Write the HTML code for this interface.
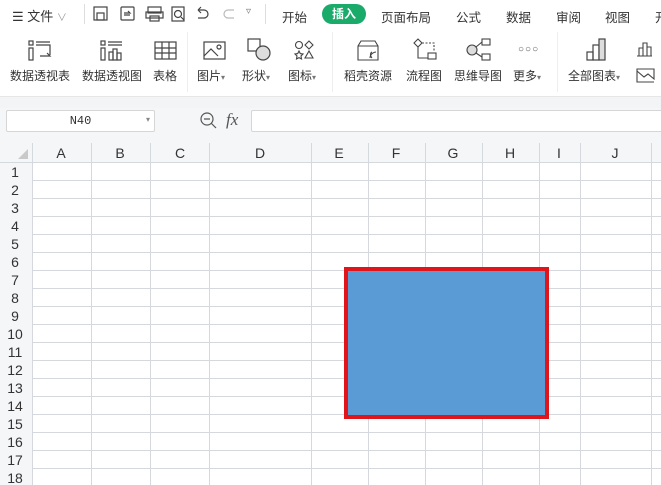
<!DOCTYPE html>
<html><head><meta charset="utf-8"><style>
*{margin:0;padding:0;box-sizing:border-box}
body{width:661px;height:485px;overflow:hidden;background:#fff;font-family:"Liberation Sans","Noto Sans CJK SC",sans-serif;position:relative;color:#333}
.a{position:absolute}
.t{font-size:12px;white-space:nowrap}
.lbl{position:absolute;top:66px;font-size:12px;color:#333;white-space:nowrap}
svg{position:absolute;overflow:visible}
</style></head><body>
<!-- top bar -->
<div class="a t" style="left:12px;top:6px;font-size:13px">☰ 文件 <span style="color:#999;font-size:10px">∨</span></div>
<div class="a" style="left:84px;top:4px;width:1px;height:20px;background:#ddd"></div>
<svg style="left:93px;top:6px" width="150" height="16" fill="none" stroke="#444" stroke-width="1.2">
<rect x="1" y="1" width="13" height="13"/><rect x="4" y="7" width="7" height="7"/>
<rect x="28" y="1" width="13" height="13" rx="1"/><path d="M31 7h6l-2-2M37 9h-6"/>
<rect x="55" y="1" width="13" height="6"/><rect x="53" y="6" width="17" height="6"/><rect x="57" y="10" width="9" height="5"/>
<rect x="79" y="1" width="12" height="14"/><circle cx="85" cy="8" r="3.5"/><path d="M88 11l3 3"/>
<path d="M105 4h6a4 4 0 0 1 0 8h-6M105 4l3-3M105 4l3 3"/>
<path stroke="#bbb" d="M141 4h-6a4 4 0 0 0 0 8h6"/>
</svg>
<div class="a t" style="left:246px;top:6px;color:#777;font-size:10px">▿</div>
<div class="a" style="left:265px;top:4px;width:1px;height:20px;background:#ddd"></div>
<div class="a t" style="left:282px;top:7px;font-size:12.5px">开始</div>
<div class="a t" style="left:322px;top:4px;width:44px;height:20px;border-radius:10px;background:#1aaa6a;color:#fff;font-weight:bold;text-align:center;line-height:20px">插入</div>
<div class="a t" style="left:381px;top:7px;font-size:12.5px">页面布局</div>
<div class="a t" style="left:456px;top:7px;font-size:12.5px">公式</div>
<div class="a t" style="left:506px;top:7px;font-size:12.5px">数据</div>
<div class="a t" style="left:556px;top:7px;font-size:12.5px">审阅</div>
<div class="a t" style="left:605px;top:7px;font-size:12.5px">视图</div>
<div class="a t" style="left:655px;top:7px;font-size:12.5px">开</div>
<!-- ribbon -->
<div class="a" style="left:0;top:28px;width:661px;height:68px">
<svg style="left:28px;top:12px" width="24" height="22" fill="none" stroke="#444" stroke-width="1.2"><rect x="1" y="1" width="4" height="4"/><rect x="1" y="8" width="4" height="12"/><path d="M8 2h14M8 5h14v10M12 16h10l-3-3"/></svg>
<div class="lbl" style="left:10px;top:39px">数据透视表</div>
<svg style="left:100px;top:12px" width="24" height="22" fill="none" stroke="#444" stroke-width="1.2"><rect x="1" y="1" width="4" height="4"/><rect x="1" y="8" width="4" height="12"/><path d="M8 2h14M8 5h14"/><rect x="9" y="12" width="4" height="8"/><rect x="13" y="9" width="4" height="11"/><rect x="17" y="13" width="4" height="7"/></svg>
<div class="lbl" style="left:82px;top:39px">数据透视图</div>
<svg style="left:154px;top:13px" width="24" height="20" fill="none" stroke="#444" stroke-width="1.2"><rect x="1" y="1" width="21" height="17"/><path d="M1 7h21M1 12h21M8 1v17M15 1v17"/></svg>
<div class="lbl" style="left:153px;top:39px">表格</div>
<div class="a" style="left:187px;top:4px;width:1px;height:60px;background:#eee"></div>
<svg style="left:203px;top:13px" width="24" height="20" fill="none" stroke="#444" stroke-width="1.2"><rect x="1" y="1" width="21" height="17"/><path d="M1 15l7-7 7 7"/><circle cx="16" cy="6" r="2"/></svg>
<div class="lbl" style="left:197px;top:39px">图片<span style="font-size:8px;color:#777">▾</span></div>
<svg style="left:247px;top:10px" width="26" height="24" fill="none" stroke="#444" stroke-width="1.2"><rect x="1" y="1" width="12" height="12"/><circle cx="16" cy="15" r="7" fill="#ddd"/></svg>
<div class="lbl" style="left:242px;top:39px">形状<span style="font-size:8px;color:#777">▾</span></div>
<svg style="left:294px;top:12px" width="22" height="20" fill="none" stroke="#444" stroke-width="1.1"><circle cx="5" cy="5" r="3.5"/><path d="M15 1l4 4-4 4-4-4z"/><path d="M5 11l1.3 2.6 2.7.4-2 2 .5 3-2.5-1.4-2.5 1.4.5-3-2-2 2.7-.4z"/><path d="M15 11l4 7h-8z"/></svg>
<div class="lbl" style="left:288px;top:39px">图标<span style="font-size:8px;color:#777">▾</span></div>
<div class="a" style="left:332px;top:4px;width:1px;height:60px;background:#eee"></div>
<svg style="left:356px;top:12px" width="24" height="22" fill="none" stroke="#444" stroke-width="1.1"><path d="M2 6l3-5h14l3 5v14H2zM2 6h20"/><path d="M14 18c0-4 4-6 6-6M16 18c-2-2-2-5 0-6"/></svg>
<div class="lbl" style="left:344px;top:39px">稻壳资源</div>
<svg style="left:412px;top:10px" width="26" height="24" fill="none" stroke="#444" stroke-width="1.1"><path d="M6 1l4 4-4 4-4-4z"/><path d="M6 9v11h10" /><path d="M10 5h12v8" stroke-dasharray="2 1.5"/><rect x="16" y="15" width="8" height="6"/></svg>
<div class="lbl" style="left:406px;top:39px">流程图</div>
<svg style="left:466px;top:10px" width="26" height="24" fill="none" stroke="#444" stroke-width="1.1"><circle cx="6" cy="12" r="5" fill="#ddd"/><path d="M10 9l6-5M10 15l6 4"/><rect x="16" y="1" width="8" height="6"/><rect x="16" y="16" width="8" height="6"/></svg>
<div class="lbl" style="left:454px;top:39px">思维导图</div>
<div class="a t" style="left:518px;top:16px;color:#555;letter-spacing:1px;font-size:10px">○○○</div>
<div class="lbl" style="left:513px;top:39px">更多<span style="font-size:8px;color:#777">▾</span></div>
<div class="a" style="left:557px;top:4px;width:1px;height:60px;background:#eee"></div>
<svg style="left:586px;top:10px" width="22" height="24" fill="none" stroke="#444" stroke-width="1.2"><rect x="1" y="14" width="6" height="8"/><rect x="7" y="7" width="6" height="15"/><rect x="13" y="1" width="6" height="21" fill="#ddd"/></svg>
<div class="lbl" style="left:568px;top:39px">全部图表<span style="font-size:8px;color:#777">▾</span></div>
<svg style="left:636px;top:12px" width="20" height="18" fill="none" stroke="#444" stroke-width="1.1"><path d="M1 16h15M3 16V8h4v8M7 16V3h4v13M11 16V7h4v9"/></svg>
<svg style="left:636px;top:39px" width="20" height="16" fill="none" stroke="#444" stroke-width="1.1"><path d="M1 4l7 6 4-3 6 5V2H1v13h17"/></svg>
</div>
<!-- gray band -->
<div class="a" style="left:0;top:96px;width:661px;height:12px;background:#f3f4f6;border-top:1px solid #e6e6e6"></div>
<div class="a" style="left:0;top:108px;width:661px;height:35px;background:#f5f6f8"></div>
<div class="a" style="left:6px;top:110px;width:149px;height:22px;background:#fff;border:1px solid #d6d6d6;border-radius:2px;font-family:'Liberation Mono',monospace;font-size:12px;text-align:center;line-height:20px;color:#333">N40<span style="position:absolute;right:4px;font-size:8px;color:#888">▾</span></div>
<svg style="left:200px;top:112px" width="18" height="18" fill="none" stroke="#555" stroke-width="1.2"><circle cx="7" cy="7" r="6"/><path d="M4 7h6M11 11l5 5"/></svg>
<div class="a" style="left:226px;top:110px;font-family:'Liberation Serif',serif;font-style:italic;font-size:17px;color:#555">fx</div>
<div class="a" style="left:251px;top:110px;width:420px;height:22px;background:#fff;border:1px solid #d6d6d6;border-radius:2px"></div>
<!-- grid -->
<svg style="left:0;top:143px" width="661" height="342">
<rect x="0" y="0" width="661" height="19" fill="#f5f6f8"/>
<rect x="0" y="0" width="32" height="342" fill="#f5f6f8"/>
<path d="M28 6v10H18z" fill="#c9c9c9"/>
<g stroke="#d5d8dc" stroke-width="1">
<path d="M0 19.5H661"/>
<path d="M32 37.5H661M32 55.5H661M32 73.5H661M32 91.5H661M32 109.5H661M32 127.5H661M32 145.5H661M32 163.5H661M32 181.5H661M32 199.5H661M32 217.5H661M32 235.5H661M32 253.5H661M32 271.5H661M32 289.5H661M32 307.5H661M32 325.5H661"/>
<path d="M32.5 0V342M91.5 0V342M150.5 0V342M209.5 0V342M311.5 0V342M368.5 0V342M425.5 0V342M482.5 0V342M539.5 0V342M580.5 0V342M651.5 0V342"/>
</g>
<g font-family="Liberation Sans" font-size="14" fill="#333" text-anchor="middle">
<text x="61" y="15">A</text><text x="120" y="15">B</text><text x="180" y="15">C</text><text x="260" y="15">D</text><text x="339" y="15">E</text><text x="396" y="15">F</text><text x="453" y="15">G</text><text x="510" y="15">H</text><text x="559" y="15">I</text><text x="615" y="15">J</text>
</g>
<g font-family="Liberation Sans" font-size="14" fill="#333" text-anchor="middle">
<text x="15" y="34">1</text><text x="15" y="52">2</text><text x="15" y="70">3</text><text x="15" y="88">4</text><text x="15" y="106">5</text><text x="15" y="124">6</text><text x="15" y="142">7</text><text x="15" y="160">8</text><text x="15" y="178">9</text><text x="15" y="196">10</text><text x="15" y="214">11</text><text x="15" y="232">12</text><text x="15" y="250">13</text><text x="15" y="268">14</text><text x="15" y="286">15</text><text x="15" y="304">16</text><text x="15" y="322">17</text><text x="15" y="340">18</text>
</g>
<rect x="346" y="126" width="201" height="148" fill="#5b9bd5" stroke="#e0151b" stroke-width="4"/>
</svg>
</body></html>
